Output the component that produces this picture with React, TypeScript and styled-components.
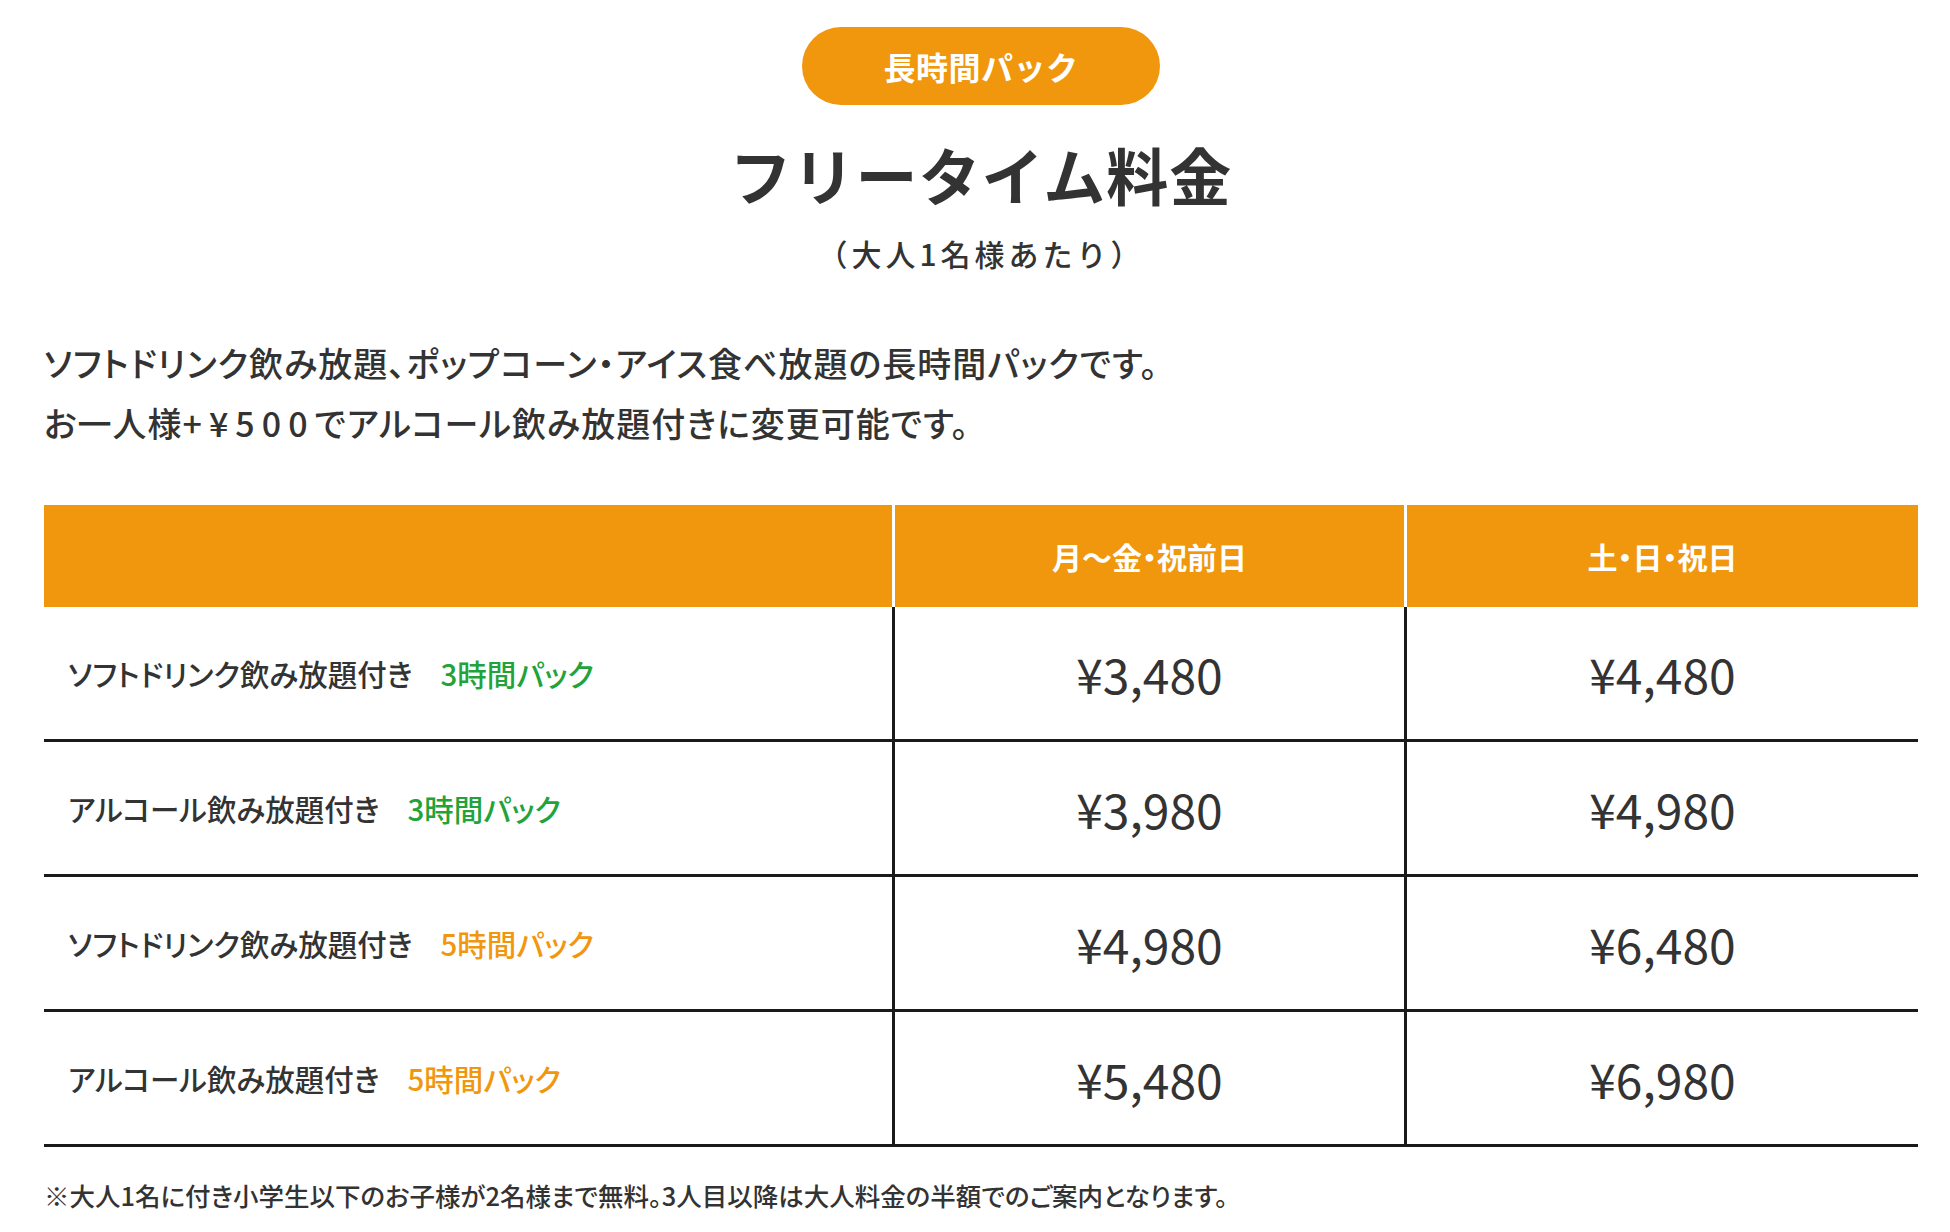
import styled, { createGlobalStyle } from "styled-components";

const GlobalStyle = createGlobalStyle`
    html, body {
        margin: 0;
        padding: 0;
        background: #ffffff;
    }
    body {
        font-family: "Noto Sans CJK JP", "Noto Sans", sans-serif;
        color: #333333;
    }
`

const ORANGE = "#f0970e";
const GREEN = "#22a33a";

const Page = styled.div`
    width: 1950px;
    box-sizing: border-box;
    padding: 27px 32px 40px 44px;
    display: flex;
    flex-direction: column;
    align-items: center;
`

/* orange pill at the top */
const Badge = styled.div`
    width: 358px;
    height: 78px;
    border-radius: 39px;
    background-color: ${ORANGE};
    color: #ffffff;
    font-size: 32px;
    font-weight: bold;
    line-height: 78px;
    text-align: center;
    letter-spacing: 0.5px;
`

const Title = styled.h1`
    margin: 32px 0 0;
    font-size: 62px;
    font-weight: bold;
    line-height: 74px;
    color: #333333;
    letter-spacing: 1px;
`

const SubTitle = styled.p`
    margin: 22px 0 0;
    font-size: 30px;
    font-weight: 500;
    line-height: 40px;
    letter-spacing: 4px;
    color: #333333;
`

const Description = styled.p`
    align-self: stretch;
    margin: 60px 0 0;
    font-size: 34px;
    font-weight: 500;
    line-height: 60px;
    letter-spacing: 1px;
    font-feature-settings: "palt";
    color: #333333;
`

/* latin part of the price note is set wider in the original */
const Num = styled.span`
    letter-spacing: 7px;
`

const Table = styled.div`
    align-self: stretch;
    margin-top: 52px;
    display: flex;
    flex-direction: column;
`

const Row = styled.div<{ $head?: boolean }>`
    display: grid;
    grid-template-columns: 848px 512px 1fr;
    height: ${(p) => (p.$head ? "102px" : "135px")};
    box-sizing: border-box;
    background-color: ${(p) => (p.$head ? ORANGE : "#ffffff")};
    border-bottom: ${(p) => (p.$head ? "none" : "3px solid #1a1a1a")};
`

const HeadCell = styled.div<{ $first?: boolean }>`
    display: flex;
    align-items: center;
    justify-content: center;
    border-left: ${(p) => (p.$first ? "none" : "3px solid #ffffff")};
    color: #ffffff;
    font-size: 30px;
    font-weight: bold;
    font-feature-settings: "palt";
`

const LabelCell = styled.div`
    display: flex;
    align-items: center;
    gap: 28px;
    padding-left: 24px;
    font-size: 29.5px;
    font-weight: 500;
    font-feature-settings: "palt";
    color: #333333;
`

const Pack = styled.span<{ $color: string }>`
    color: ${(p) => p.$color};
    font-weight: 500;
`

const PriceCell = styled.div`
    display: flex;
    align-items: center;
    justify-content: center;
    border-left: 3px solid #1a1a1a;
    font-size: 48px;
    font-weight: normal;
    color: #333333;
`

const Note = styled.p`
    align-self: stretch;
    margin: 30px 0 0;
    font-size: 25.5px;
    font-weight: 500;
    line-height: 36px;
    font-feature-settings: "palt";
    color: #333333;
`

const plans = [
    { label: "ソフトドリンク飲み放題付き", pack: "3時間パック", color: GREEN, weekday: "¥3,480", holiday: "¥4,480" },
    { label: "アルコール飲み放題付き", pack: "3時間パック", color: GREEN, weekday: "¥3,980", holiday: "¥4,980" },
    { label: "ソフトドリンク飲み放題付き", pack: "5時間パック", color: ORANGE, weekday: "¥4,980", holiday: "¥6,480" },
    { label: "アルコール飲み放題付き", pack: "5時間パック", color: ORANGE, weekday: "¥5,480", holiday: "¥6,980" },
]

const App = () => {
    return (
        <>
            <GlobalStyle />
            <Page>
                <Badge>長時間パック</Badge>
                <Title>フリータイム料金</Title>
                <SubTitle>（大人1名様あたり）</SubTitle>
                <Description>
                    ソフトドリンク飲み放題、ポップコーン・アイス食べ放題の長時間パックです。<br />
                    お一人様<Num>+¥500</Num>でアルコール飲み放題付きに変更可能です。
                </Description>
                <Table>
                    <Row $head>
                        <HeadCell $first></HeadCell>
                        <HeadCell>月～金・祝前日</HeadCell>
                        <HeadCell>土・日・祝日</HeadCell>
                    </Row>
                    {plans.map((plan, idx) => (
                        <Row key={idx}>
                            <LabelCell>
                                {plan.label}
                                <Pack $color={plan.color}>{plan.pack}</Pack>
                            </LabelCell>
                            <PriceCell>{plan.weekday}</PriceCell>
                            <PriceCell>{plan.holiday}</PriceCell>
                        </Row>
                    ))}
                </Table>
                <Note>
                    ※大人1名に付き小学生以下のお子様が2名様まで無料。3人目以降は大人料金の半額でのご案内となります。
                </Note>
            </Page>
        </>
    )
}

export default App;
